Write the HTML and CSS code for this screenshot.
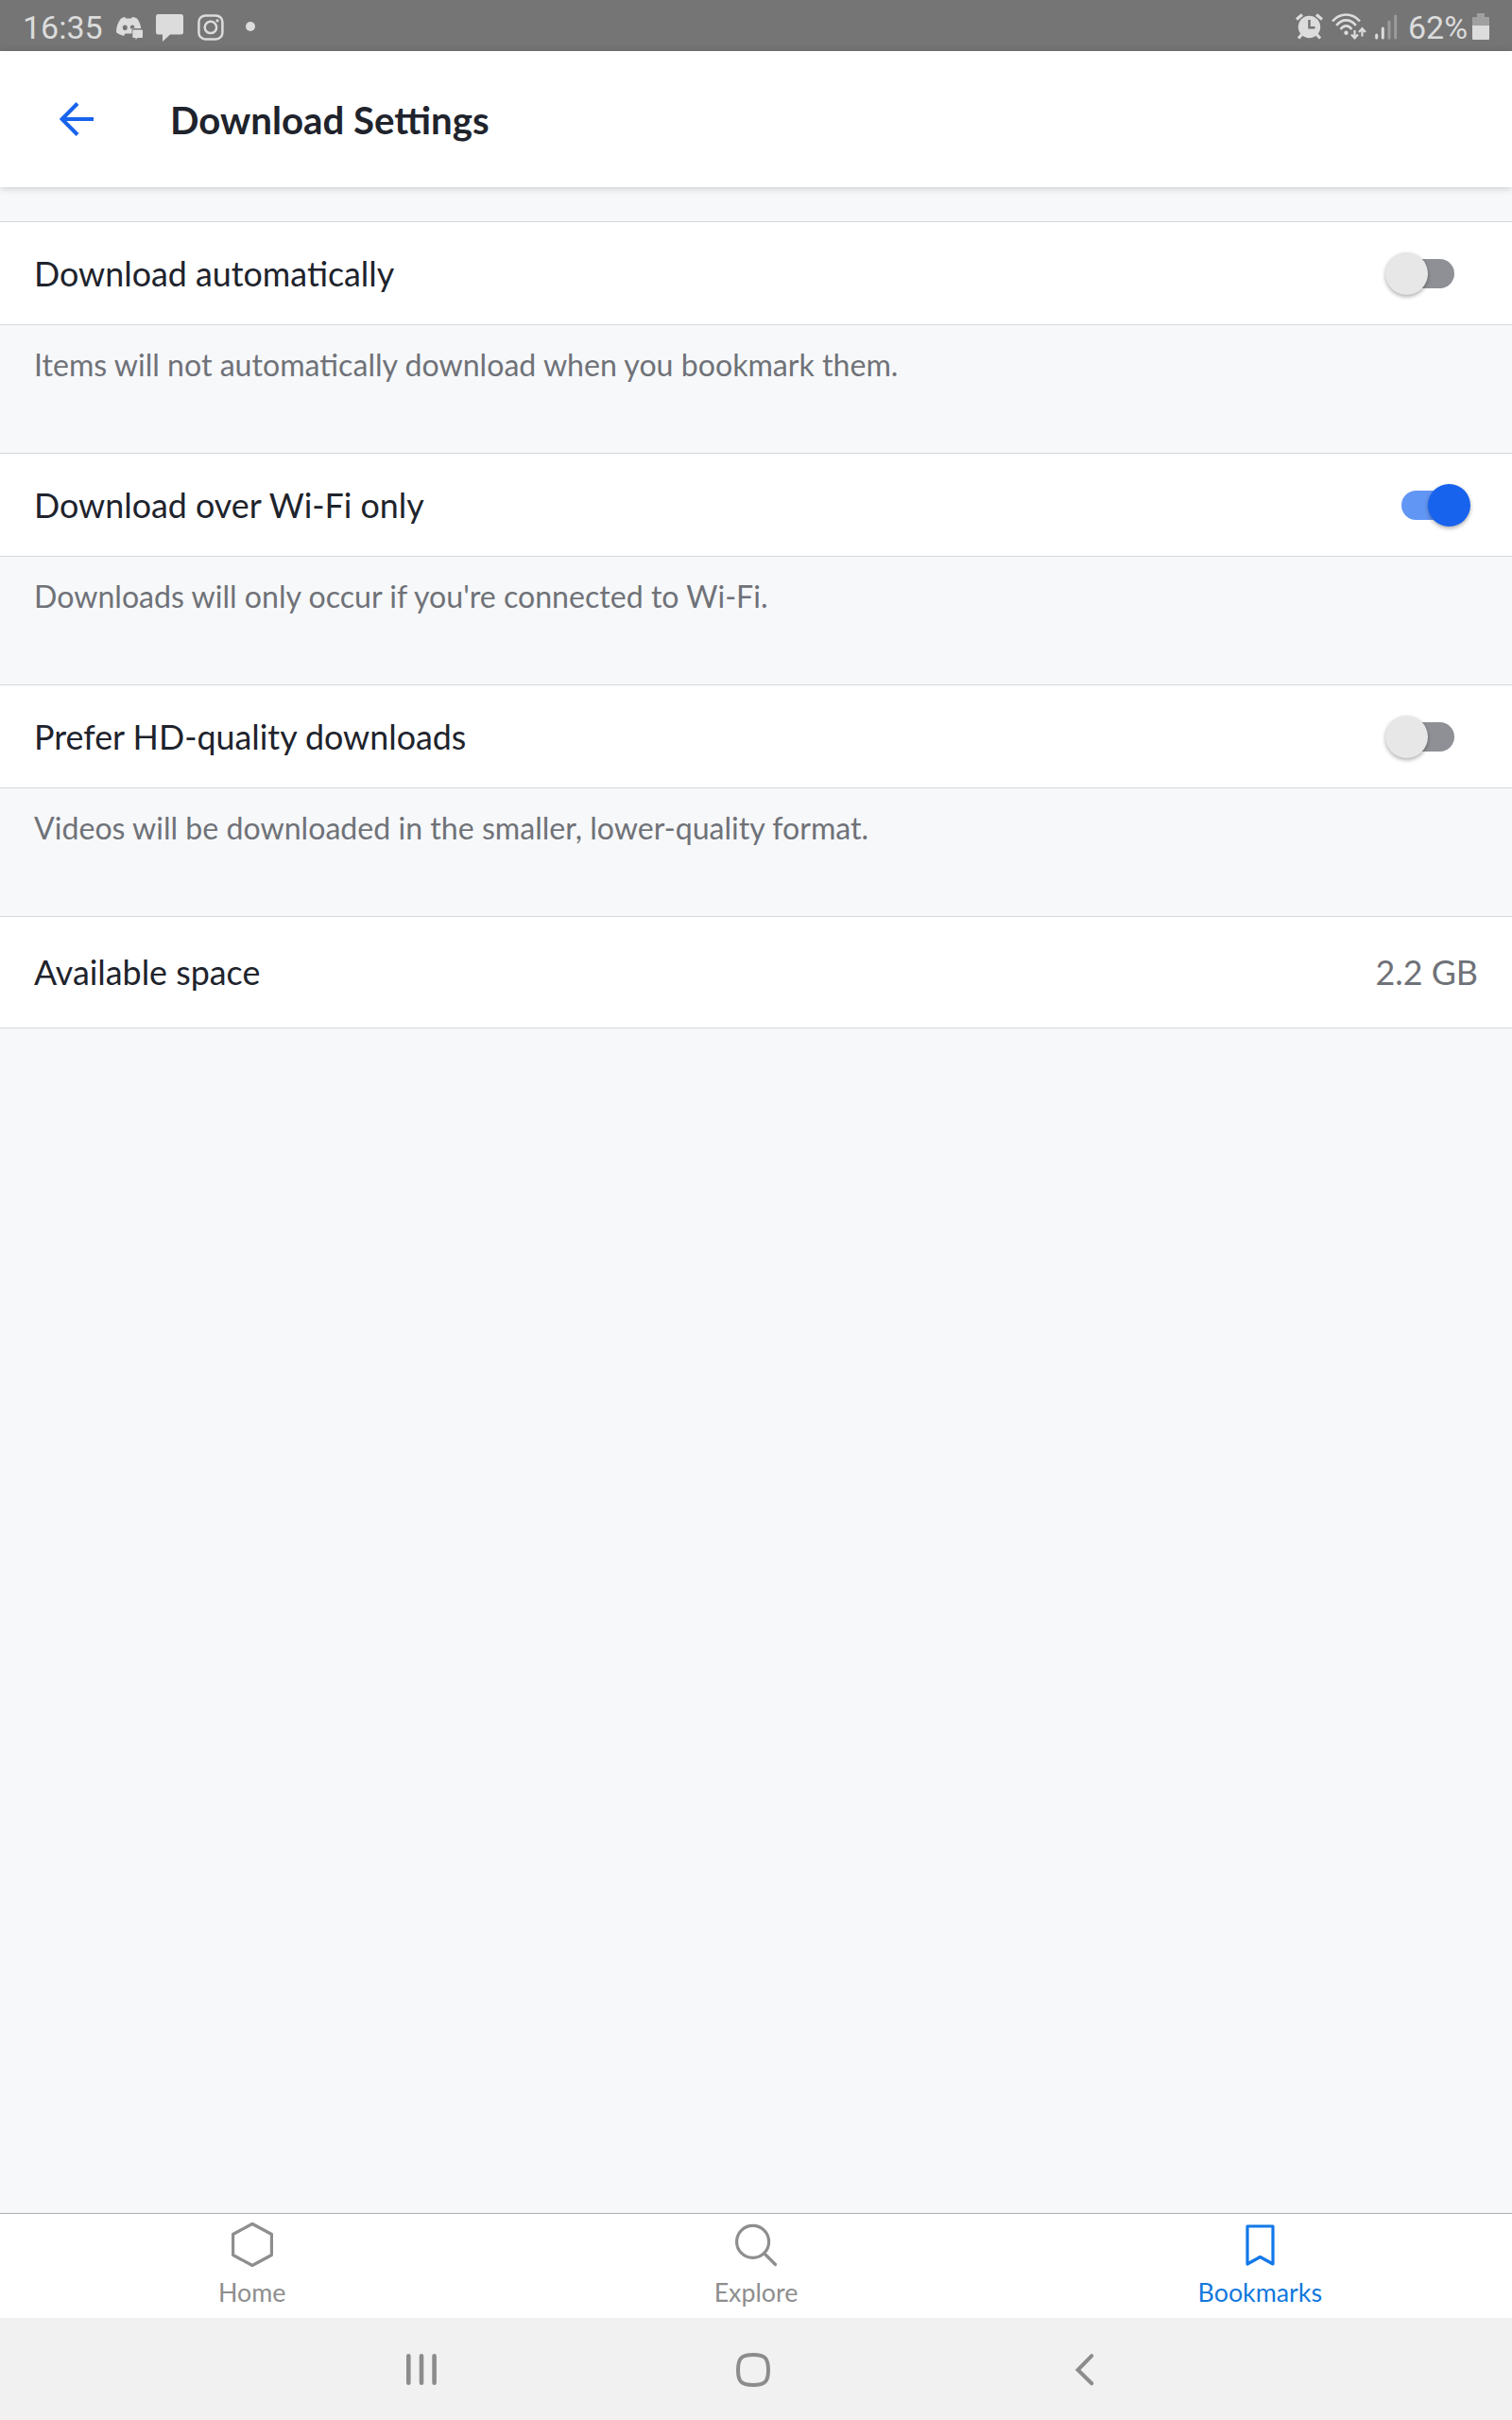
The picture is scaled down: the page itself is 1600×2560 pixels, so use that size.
FILE: index.html
```html
<!DOCTYPE html>
<html lang="en">
<head>
<meta charset="utf-8">
<title>Download Settings</title>
<link rel="stylesheet" href="styles.css">
</head>
<body>
<div class="screen">
  <div class="status">
    <div class="status-group">
      <span class="clock">16:35</span>
      <svg class="discord" width="28" height="24" viewBox="0 0 28 24">
        <path fill="#dcdcdc" fill-rule="evenodd" d="M5 1.5C6.500.6 8 .2 9.300 0L10 1.400H16L17 0C19 .2 20.500.8 22 1.600 24.500 5 26 8.500 26.200 12H17.500A3 3 0 0 0 16.500 14.500V17.500H9.500L8 20C5 19.300 2.500 18 0 16.300 0 10.500 1.500 6 5 1.500ZM9.300 8.500A2.500 2.800 0 1 0 9.300 14.100 2.500 2.800 0 1 0 9.300 8.500ZM17.300 8.500A2.500 2.800 0 0 0 15 12.500L19.500 11.300A2.500 2.800 0 0 0 17.300 8.500Z"/>
        <path fill="#dcdcdc" d="M18.300 13.500H27Q28 13.500 28 14.500V21Q28 22 27 22H22.500L20.500 24V22H18.300Q17.300 22 17.300 21V14.500Q17.300 13.500 18.300 13.500Z"/>
      </svg>
      <svg class="chat" width="30" height="30" viewBox="0 0 30 30"><path fill="#dcdcdc" d="M2.500 0H26.500Q29 0 29 2.500V19Q29 21.500 26.500 21.500H15L7 29V21.500H2.500Q0 21.500 0 19V2.500Q0 0 2.500 0Z"/></svg>
      <svg class="camera" width="28" height="28" viewBox="0 0 28 28" fill="none" stroke="#dcdcdc" stroke-width="2.500"><rect x="1.400" y="1.400" width="25" height="25" rx="7"/><circle cx="13.900" cy="13.900" r="6.200"/><circle cx="21" cy="6.800" r="1.600" fill="#dcdcdc" stroke="none"/></svg>
      <span class="more"></span>
    </div>
    <div class="status-group">
      <svg class="alarm" width="29" height="28" viewBox="0 0 29 28"><g stroke="#dcdcdc" stroke-width="3.200"><path d="M1 6.500 7 1.500M28 6.500 22 1.500M7 22 3 26.500M22 22 26 26.500"/></g><circle cx="14.500" cy="14.500" r="11.700" fill="#dcdcdc"/><path d="M14.500 7V15.200H20.500" fill="none" stroke="#757575" stroke-width="2.500"/></svg>
      <svg class="wifi" width="37" height="28" viewBox="0 0 37 28" fill="none" stroke="#dcdcdc" stroke-width="2.600"><path d="M1 8.500C9-.8 22-.8 30 8.500M5.200 12.800C11.500 5.500 19.500 5.500 25.800 12.800M9.500 17C13.500 12.200 17.500 12.200 21.500 17"/><circle cx="15.500" cy="20.800" r="2.200" fill="#dcdcdc" stroke="none"/><path stroke-width="2.200" d="M24.500 18V26M21 22.500 24.500 26.300 28 22.500M32.500 24.500V16.500M29 20 32.500 16.200 36 20"/></svg>
      <svg class="signal" width="24" height="27" viewBox="0 0 24 27" stroke-width="3" stroke-linecap="round"><path stroke="#dcdcdc" d="M1.700 22V25M8.300 15V25"/><path stroke="#9c9c9c" d="M15 8V25M21.700 2V25"/></svg>
      <span class="percent">62%</span>
      <svg class="battery" width="18" height="28" viewBox="0 0 18 28"><path fill="#a0a0a0" d="M5 0H13V4H17Q18 4 18 5V13H0V5Q0 4 1 4H5Z"/><path fill="#dcdcdc" d="M0 13H18V27Q18 28 17 28H1Q0 28 0 27Z"/></svg>
    </div>
  </div>

  <header class="header">
    <svg width="38" height="38" viewBox="0 0 38 38" fill="none" stroke="#1863ed" stroke-width="4"><path d="M36 19H4"/><path d="M19 2.500 2.500 19 19 35.500"/></svg>
    <h1>Download Settings</h1>
  </header>

  <main class="content">
    <section>
      <div class="row"><span class="label">Download automatically</span><span class="toggle"><span class="knob"></span></span></div>
      <p class="hint">Items will not automatically download when you bookmark them.</p>
    </section>
    <section>
      <div class="row"><span class="label">Download over Wi-Fi only</span><span class="toggle on"><span class="knob"></span></span></div>
      <p class="hint">Downloads will only occur if you're connected to Wi-Fi.</p>
    </section>
    <section>
      <div class="row"><span class="label">Prefer HD-quality downloads</span><span class="toggle"><span class="knob"></span></span></div>
      <p class="hint">Videos will be downloaded in the smaller, lower-quality format.</p>
    </section>
    <div class="row space"><span class="label">Available space</span><span class="label value">2.2 GB</span></div>
  </main>

  <nav class="tabs">
    <div class="tab"><svg width="48" height="50" viewBox="0 0 48 50" fill="none" stroke="#8e8e8e" stroke-width="3.200" stroke-linejoin="round"><path d="M24 3.500 44.400 14.500V36.500L24 47.500 3.600 36.500V14.500Z"/></svg><span>Home</span></div>
    <div class="tab"><svg width="48" height="50" viewBox="0 0 48 50" fill="none" stroke="#8e8e8e" stroke-width="3.200" stroke-linecap="round"><circle cx="20.600" cy="22.400" r="17"/><path d="M33 35 44.500 46.500"/></svg><span>Explore</span></div>
    <div class="tab active"><svg width="48" height="50" viewBox="0 0 48 50" fill="none" stroke="#1278e8" stroke-width="3.200" stroke-linejoin="round"><path d="M11 6H38V46L24.500 38.500 11 46Z"/></svg><span>Bookmarks</span></div>
  </nav>

  <div class="system">
    <svg width="34" height="36" viewBox="0 0 34 36" stroke="#8c8c8c" stroke-width="4.600" stroke-linecap="round"><path d="M3.300 3.300V31.700M17 3.300V31.700M30.600 3.300V31.700"/></svg>
    <svg class="home-key" width="38" height="38" viewBox="0 0 38 38" fill="none" stroke="#8c8c8c" stroke-width="4"><path d="M19 3C31.500 3 35 6.500 35 19S31.500 35 19 35 3 31.500 3 19 6.500 3 19 3Z"/></svg>
    <svg class="back-key" width="22" height="36" viewBox="0 0 22 36" fill="none" stroke="#8c8c8c" stroke-width="4" stroke-linecap="round"><path d="M18.200 3.200 3.600 18 18.200 32.300"/></svg>
  </div>
</div>
</body>
</html>
```
FILE: styles.css
```css
* { box-sizing: border-box; }
body { margin: 0; font-family: Lato, "Open Sans", sans-serif; background: #f7f8fa; }
svg { display: block; flex: none; }
.screen { width: 1600px; height: 2560px; display: flex; flex-direction: column; }

.status { height: 54px; flex: none; background: #757575; color: #dcdcdc; display: flex; justify-content: space-between; padding: 0 24px 0 24px; font: 34px/58px Roboto, sans-serif; }
.status-group { display: flex; align-items: flex-start; }
.clock { width: 99px; white-space: nowrap; }
.discord { margin-top: 18px; }
.chat { margin: 15px 0 0 14px; }
.camera { margin: 15px 0 0 14px; }
.more { width: 10px; height: 10px; border-radius: 50%; background: #dcdcdc; margin: 23px 5px 0 23px; }
.alarm { margin-top: 14px; }
.wifi { margin: 14px 0 0 9px; }
.signal { margin: 15px 0 0 9px; }
.percent { width: 67px; margin-left: 11px; white-space: nowrap; }
.battery { margin: 14px 0 0 1px; }

.header { height: 144px; flex: none; position: relative; background: #fff; display: flex; align-items: center; gap: 79px; padding-left: 63px; box-shadow: 0 1px 8px rgba(0, 0, 0, .2); }
.header h1 { margin: 2px 0 0; font-size: 40.2px; line-height: 48px; font-weight: 700; color: #20232c; }

.content { flex: 1; padding-top: 36px; }
.row { height: 110px; background: #fff; border: 1px solid #d5d7db; border-width: 1px 0; display: flex; align-items: center; justify-content: space-between; padding: 0 36px; font-size: 35.85px; line-height: 46px; color: #20232c; }
.label { padding-top: 1px; }
.hint { height: 135px; margin: 0; padding: 22px 36px 0; font-size: 32.12px; line-height: 40px; color: #6f7278; }
.space { height: 119px; padding-bottom: 1px; }
.value { color: #6f7278; }

.toggle { width: 66px; height: 31px; border-radius: 16px; background: #8e9095; display: flex; align-items: center; margin-right: 25px; }
.knob { width: 45px; height: 45px; flex: none; border-radius: 50%; background: #e7e7e7; box-shadow: 0 2px 4px rgba(0, 0, 0, .32); margin-left: -7px; }
.toggle.on { width: 67px; margin-right: 14px; background: #6296f5; }
.toggle.on .knob { margin-left: 28px; background: #1863ed; }

.tabs { height: 111px; flex: none; border-top: 1px solid #a9b0b0; background: #fff; display: grid; grid-template-columns: repeat(3, 1fr); }
.tab { display: flex; flex-direction: column; align-items: center; padding-top: 7px; font-size: 26.8px; line-height: 34px; gap: 9px; color: #8e8e8e; }
.active { color: #1278dc; }

.system { height: 108px; flex: none; background: #f1f1f1; display: flex; align-items: center; padding: 2px 0 0 429px; }
.home-key { margin-left: 315px; }
.back-key { margin-left: 321px; }
```
